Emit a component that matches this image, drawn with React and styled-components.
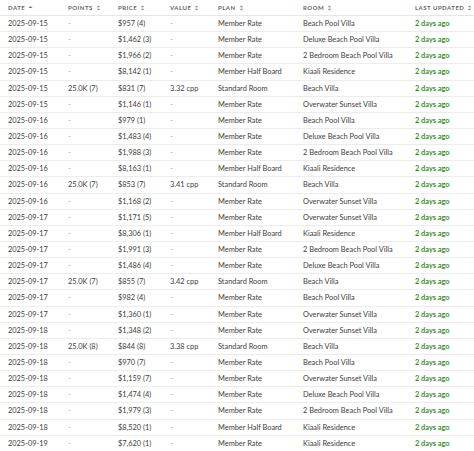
import React from "react";
import styled, { createGlobalStyle } from "styled-components";

const GlobalStyle = createGlobalStyle`
  html, body {
    margin: 0;
    padding: 0;
    background: #ffffff;
  }
  body {
    font-family: Lato, "Open Sans", "Liberation Sans", sans-serif;
  }
`;

const Table = styled.table`
  width: 474px;
  border-collapse: collapse;
  table-layout: fixed;
`;

const HeadCell = styled.th`
  height: 15px;
  padding: 0 0 0 8px;
  text-align: left;
  font-size: 6px;
  font-weight: 700;
  letter-spacing: 0.5px;
  color: #666666;
  text-transform: uppercase;
  border-bottom: 1px solid #e6e6e6;
  white-space: nowrap;
  vertical-align: middle;
`;

const SortIcon = styled.svg`
  width: 5px;
  height: 6px;
  margin-left: 3px;
  vertical-align: -0.5px;
`;

const Row = styled.tr`
  border-bottom: 1px solid #ececec;
  &:last-child {
    border-bottom: none;
  }
`;

const Cell = styled.td`
  height: 15.15px;
  padding: 0 0 0 8px;
  font-size: 7.4px;
  color: ${p => (p.$muted ? "#9a9a9a" : p.$fresh ? "#3a8f2c" : "#3d3d3d")};
  font-weight: ${p => (p.$fresh ? 700 : 400)};
  white-space: nowrap;
  overflow: hidden;
  vertical-align: middle;
`;

const columns = [
  { label: "Date", width: 60, sort: "asc" },
  { label: "Points", width: 50 },
  { label: "Price", width: 52 },
  { label: "Value", width: 48 },
  { label: "Plan", width: 85 },
  { label: "Room", width: 112 },
  { label: "Last Updated", width: 67 },
];

const rows = [
  ["2025-09-15", "-", "$957 (4)", "-", "Member Rate", "Beach Pool Villa"],
  ["2025-09-15", "-", "$1,462 (3)", "-", "Member Rate", "Deluxe Beach Pool Villa"],
  ["2025-09-15", "-", "$1,966 (2)", "-", "Member Rate", "2 Bedroom Beach Pool Villa"],
  ["2025-09-15", "-", "$8,142 (1)", "-", "Member Half Board", "Kiaali Residence"],
  ["2025-09-15", "25.0K (7)", "$831 (7)", "3.32 cpp", "Standard Room", "Beach Villa"],
  ["2025-09-15", "-", "$1,146 (1)", "-", "Member Rate", "Overwater Sunset Villa"],
  ["2025-09-16", "-", "$979 (1)", "-", "Member Rate", "Beach Pool Villa"],
  ["2025-09-16", "-", "$1,483 (4)", "-", "Member Rate", "Deluxe Beach Pool Villa"],
  ["2025-09-16", "-", "$1,988 (3)", "-", "Member Rate", "2 Bedroom Beach Pool Villa"],
  ["2025-09-16", "-", "$8,163 (1)", "-", "Member Half Board", "Kiaali Residence"],
  ["2025-09-16", "25.0K (7)", "$853 (7)", "3.41 cpp", "Standard Room", "Beach Villa"],
  ["2025-09-16", "-", "$1,168 (2)", "-", "Member Rate", "Overwater Sunset Villa"],
  ["2025-09-17", "-", "$1,171 (5)", "-", "Member Rate", "Overwater Sunset Villa"],
  ["2025-09-17", "-", "$8,306 (1)", "-", "Member Half Board", "Kiaali Residence"],
  ["2025-09-17", "-", "$1,991 (3)", "-", "Member Rate", "2 Bedroom Beach Pool Villa"],
  ["2025-09-17", "-", "$1,486 (4)", "-", "Member Rate", "Deluxe Beach Pool Villa"],
  ["2025-09-17", "25.0K (7)", "$855 (7)", "3.42 cpp", "Standard Room", "Beach Villa"],
  ["2025-09-17", "-", "$982 (4)", "-", "Member Rate", "Beach Pool Villa"],
  ["2025-09-17", "-", "$1,360 (1)", "-", "Member Rate", "Overwater Sunset Villa"],
  ["2025-09-18", "-", "$1,348 (2)", "-", "Member Rate", "Overwater Sunset Villa"],
  ["2025-09-18", "25.0K (8)", "$844 (8)", "3.38 cpp", "Standard Room", "Beach Villa"],
  ["2025-09-18", "-", "$970 (7)", "-", "Member Rate", "Beach Pool Villa"],
  ["2025-09-18", "-", "$1,159 (7)", "-", "Member Rate", "Overwater Sunset Villa"],
  ["2025-09-18", "-", "$1,474 (4)", "-", "Member Rate", "Deluxe Beach Pool Villa"],
  ["2025-09-18", "-", "$1,979 (3)", "-", "Member Rate", "2 Bedroom Beach Pool Villa"],
  ["2025-09-18", "-", "$8,520 (1)", "-", "Member Half Board", "Kiaali Residence"],
  ["2025-09-19", "-", "$7,620 (1)", "-", "Member Rate", "Kiaali Residence"],
];

const Sort = ({ dir }) => (
  <SortIcon viewBox="0 0 10 12">
    {dir === "asc" ? (
      <path d="M5 2 L9 6 L1 6 Z" fill="#777" />
    ) : (
      <>
        <path d="M5 1 L8.5 4.6 L1.5 4.6 Z" fill="#888" />
        <path d="M5 11 L8.5 7.4 L1.5 7.4 Z" fill="#888" />
      </>
    )}
  </SortIcon>
);

const App = () => (
  <>
    <GlobalStyle />
    <Table>
      <colgroup>
        {columns.map(c => (
          <col key={c.label} style={{ width: c.width }} />
        ))}
      </colgroup>
      <thead>
        <tr>
          {columns.map(c => (
            <HeadCell key={c.label}>
              {c.label}
              <Sort dir={c.sort} />
            </HeadCell>
          ))}
        </tr>
      </thead>
      <tbody>
        {rows.map((r, i) => (
          <Row key={i}>
            {r.map((v, j) => (
              <Cell key={j} $muted={v === "-"}>
                {v}
              </Cell>
            ))}
            <Cell $fresh>2 days ago</Cell>
          </Row>
        ))}
      </tbody>
    </Table>
  </>
);

export default App;
